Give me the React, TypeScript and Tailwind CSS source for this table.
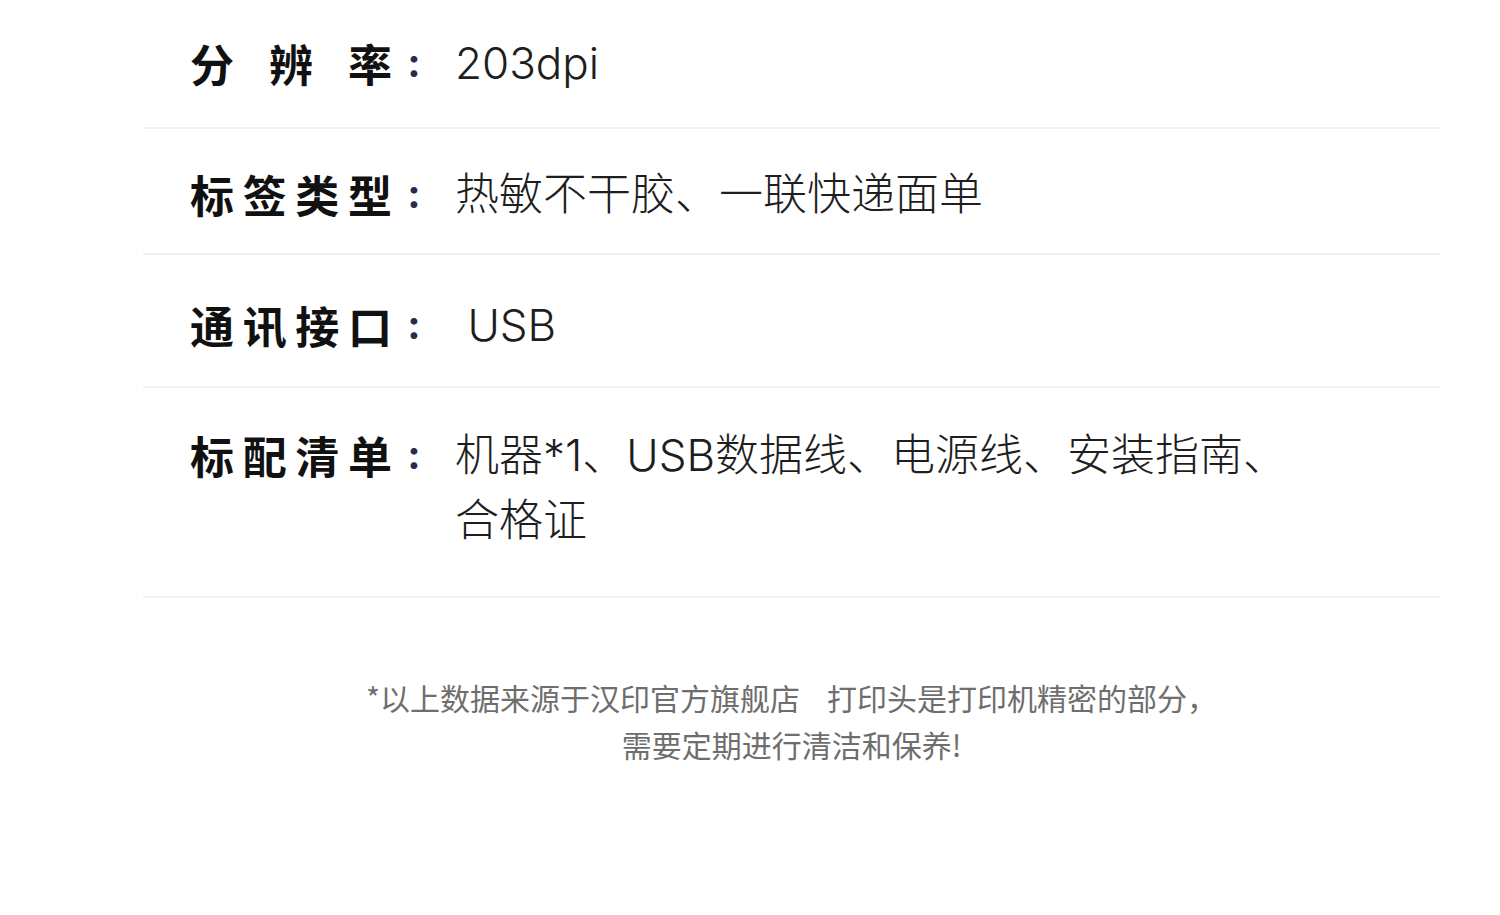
const rows = [
  { label: ["分", "辨", "率"], value: ["203dpi"], pad: "pt-[31px] pb-[31px]" },
  { label: ["标", "签", "类", "型"], value: ["热敏不干胶、一联快递面单"], pad: "pt-[33px] pb-[26px]" },
  { label: ["通", "讯", "接", "口"], value: ["\u00a0USB"], pad: "pt-[38px] pb-[28px]" },
  {
    label: ["标", "配", "清", "单"],
    value: ["机器*1、USB数据线、电源线、安装指南、", "合格证"],
    pad: "pt-[35px] pb-[43px]",
  },
];

export default function App() {
  return (
    <div className="min-h-[915px] w-full bg-white font-['Inter','Noto_Sans_CJK_SC',sans-serif]">
      <div className="ml-[143px] w-[1297px]">
        {rows.map((row, i) => (
          <div key={i} className={`flex border-b-2 border-[#f1f1f1] pl-[47px] ${row.pad}`}>
            <div className="flex h-[64px] w-[202px] shrink-0 items-center justify-between font-['Noto_Sans_CJK_SC',sans-serif] text-[44px] font-bold text-[#111]">
              {row.label.map((c, j) => (
                <span key={j}>{c}</span>
              ))}
            </div>
            <div className="flex h-[64px] w-[44px] shrink-0 items-center justify-center text-[40px] font-bold leading-none text-[#2a2a4c]">
              :
            </div>
            <div className="ml-[19px] text-[44px] font-light leading-[65px] text-[#1e1e1e]">
              {row.value.map((v, j) => (
                <div key={j} className="whitespace-pre">
                  {v}
                </div>
              ))}
            </div>
          </div>
        ))}
        <div className="mt-[76px] text-center font-['Noto_Sans_CJK_SC',sans-serif] text-[30px] leading-[47px] text-[#6e6e6e]">
          <p>*以上数据来源于汉印官方旗舰店&nbsp;&nbsp;&nbsp;&nbsp;打印头是打印机精密的部分，</p>
          <p>需要定期进行清洁和保养!</p>
        </div>
      </div>
    </div>
  );
}
